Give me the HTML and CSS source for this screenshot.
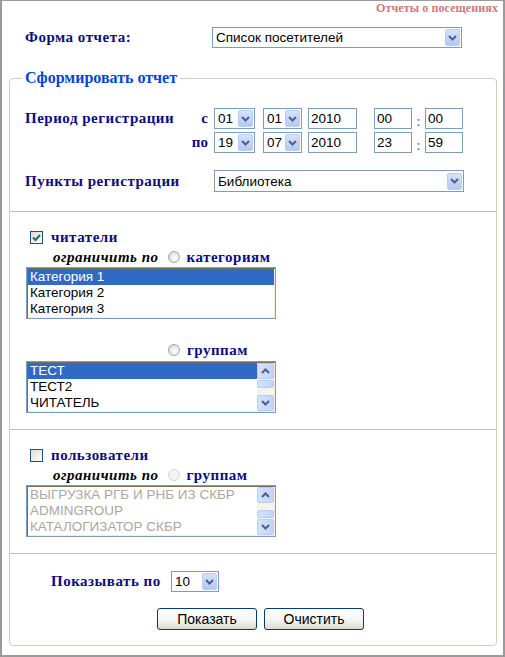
FILE: index.html
```html
<!DOCTYPE html>
<html lang="ru">
<head>
<meta charset="utf-8">
<title>Отчеты о посещениях</title>
<link rel="stylesheet" href="styles.css">
</head>
<body>
<div class="page">
  <div class="title">Отчеты о посещениях</div>

  <div class="form-row">
    <span class="lbl">Форма отчета:</span>
    <div class="sel w-form"><span class="v">Список посетителей</span><span class="b"><svg width="9" height="6" viewBox="0 0 9 6"><path d="M1 1 L4.5 4.5 L8 1" fill="none" stroke="#4d6185" stroke-width="2"/></svg></span></div>
  </div>

  <fieldset class="fs">
    <legend>Сформировать отчет</legend>

    <div class="period">
      <span class="lbl period-lbl">Период регистрации</span>
      <div class="period-rows">
        <div class="prow">
          <span class="sub">с</span>
          <div class="sel w-day"><span class="v">01</span><span class="b"><svg width="9" height="6" viewBox="0 0 9 6"><path d="M1 1 L4.5 4.5 L8 1" fill="none" stroke="#4d6185" stroke-width="2"/></svg></span></div>
          <div class="sel w-mon"><span class="v">01</span><span class="b"><svg width="9" height="6" viewBox="0 0 9 6"><path d="M1 1 L4.5 4.5 L8 1" fill="none" stroke="#4d6185" stroke-width="2"/></svg></span></div>
          <div class="inp w-year">2010</div>
          <div class="inp w-time">00</div>
          <span class="colon">:</span>
          <div class="inp w-time">00</div>
        </div>
        <div class="prow">
          <span class="sub">по</span>
          <div class="sel w-day"><span class="v">19</span><span class="b"><svg width="9" height="6" viewBox="0 0 9 6"><path d="M1 1 L4.5 4.5 L8 1" fill="none" stroke="#4d6185" stroke-width="2"/></svg></span></div>
          <div class="sel w-mon"><span class="v">07</span><span class="b"><svg width="9" height="6" viewBox="0 0 9 6"><path d="M1 1 L4.5 4.5 L8 1" fill="none" stroke="#4d6185" stroke-width="2"/></svg></span></div>
          <div class="inp w-year">2010</div>
          <div class="inp w-time">23</div>
          <span class="colon">:</span>
          <div class="inp w-time">59</div>
        </div>
      </div>
    </div>

    <div class="points">
      <span class="lbl points-lbl">Пункты регистрации</span>
      <div class="sel w-points"><span class="v">Библиотека</span><span class="b"><svg width="9" height="6" viewBox="0 0 9 6"><path d="M1 1 L4.5 4.5 L8 1" fill="none" stroke="#4d6185" stroke-width="2"/></svg></span></div>
    </div>

    <div class="sep sep-1"></div>

    <div class="block">
      <div class="chk-row">
        <span class="cb"><svg width="9" height="8" viewBox="0 0 9 8"><path d="M1 3.5 L3.5 6 L8 1" fill="none" stroke="#21715a" stroke-width="2"/></svg></span>
        <span class="lbl">читатели</span>
      </div>
      <div class="limit-row">
        <span class="limit">ограничить по</span>
        <span class="rb"></span>
        <span class="lbl">категориям</span>
      </div>
      <div class="lst">
        <div class="items">
          <div class="it sel-it">Категория 1</div>
          <div class="it">Категория 2</div>
          <div class="it">Категория 3</div>
        </div>
      </div>
      <div class="group-row">
        <span class="rb"></span>
        <span class="lbl">группам</span>
      </div>
      <div class="lst lst-3">
        <div class="items">
          <div class="it sel-it">ТЕСТ</div>
          <div class="it">ТЕСТ2</div>
          <div class="it">ЧИТАТЕЛЬ</div>
        </div>
        <div class="sb">
          <span class="sbb"><svg width="9" height="6" viewBox="0 0 9 6"><path d="M1 5 L4.5 1.5 L8 5" fill="none" stroke="#4d6185" stroke-width="2"/></svg></span>
          <span class="thumb"></span>
          <span class="sbb sbb-down"><svg width="9" height="6" viewBox="0 0 9 6"><path d="M1 1 L4.5 4.5 L8 1" fill="none" stroke="#4d6185" stroke-width="2"/></svg></span>
        </div>
      </div>
    </div>

    <div class="sep sep-2"></div>

    <div class="block">
      <div class="chk-row">
        <span class="cb"></span>
        <span class="lbl">пользователи</span>
      </div>
      <div class="limit-row">
        <span class="limit">ограничить по</span>
        <span class="rb rb-dis"></span>
        <span class="lbl">группам</span>
      </div>
      <div class="lst lst-dis">
        <div class="items">
          <div class="it">ВЫГРУЗКА РГБ И РНБ ИЗ СКБР</div>
          <div class="it">ADMINGROUP</div>
          <div class="it">КАТАЛОГИЗАТОР СКБР</div>
        </div>
        <div class="sb">
          <span class="sbb"><svg width="9" height="6" viewBox="0 0 9 6"><path d="M1 5 L4.5 1.5 L8 5" fill="none" stroke="#4d6185" stroke-width="2"/></svg></span>
          <span class="thumb thumb-low"></span>
          <span class="sbb"><svg width="9" height="6" viewBox="0 0 9 6"><path d="M1 1 L4.5 4.5 L8 1" fill="none" stroke="#4d6185" stroke-width="2"/></svg></span>
        </div>
      </div>
    </div>

    <div class="sep sep-3"></div>

    <div class="show-row">
      <span class="lbl">Показывать по</span>
      <div class="sel w-show"><span class="v">10</span><span class="b"><svg width="9" height="6" viewBox="0 0 9 6"><path d="M1 1 L4.5 4.5 L8 1" fill="none" stroke="#4d6185" stroke-width="2"/></svg></span></div>
    </div>

    <div class="btn-row">
      <button class="btn" type="button">Показать</button>
      <button class="btn" type="button">Очистить</button>
    </div>
  </fieldset>
</div>
</body>
</html>
```

FILE: styles.css
```css
html, body { margin: 0; padding: 0; background: #fff; }
body { font-family: "Liberation Serif", "Times New Roman", serif; }

.page {
  width: 505px;
  height: 657px;
  box-sizing: border-box;
  border: 2px solid #9a9a9a;
  border-top-width: 1px;
  padding: 0;
}

.title {
  text-align: right;
  color: #d07878;
  font-weight: bold;
  font-size: 12px;
  letter-spacing: 0.1px;
  line-height: 12px;
  padding: 1px 5px 0 0;
  height: 13px;
}

.lbl {
  color: #0c0c80;
  font-weight: bold;
  font-size: 15px;
  letter-spacing: 0.5px;
  white-space: nowrap;
}

.form-row {
  display: flex;
  align-items: center;
  margin-top: 12px;
  padding-left: 23px;
  height: 21px;
}
.form-row .lbl { width: 187px; }

/* select look */
.sel {
  display: flex;
  align-items: center;
  height: 21px;
  box-sizing: border-box;
  border: 1px solid #7f9db9;
  background: #fff;
  font-family: "Liberation Sans", Arial, sans-serif;
  font-size: 13.5px;
  color: #000;
}
.sel .v { flex: 1; padding-left: 3px; white-space: nowrap; }
.sel .b {
  width: 15px;
  height: 17px;
  margin-right: 1px;
  border: 1px solid #b8cdf9;
  border-radius: 2px;
  box-sizing: border-box;
  background: linear-gradient(#d6e2fe, #b4c8f6);
  display: flex;
  align-items: center;
  justify-content: center;
}
.w-form { width: 250px; }
.w-day { width: 41px; }
.w-mon { width: 39px; margin-left: 8px; }
.w-points { width: 250px; height: 22px; }
.w-show { width: 48px; }

.inp {
  height: 21px;
  box-sizing: border-box;
  border: 1px solid #7f9db9;
  font-family: "Liberation Sans", Arial, sans-serif;
  font-size: 13.5px;
  line-height: 19px;
  padding-left: 2px;
}
.w-year { width: 49px; margin-left: 6px; }
.w-time { width: 38px; }
.w-year + .w-time { margin-left: 17px; }
.colon {
  width: 13px;
  text-align: center;
  color: #6d87a8;
  font-family: "Liberation Sans", Arial, sans-serif;
  font-size: 13px;
  font-weight: bold;
  padding-top: 6px;
}

/* fieldset */
.fs {
  margin: 21px 6px 0 7px;
  padding: 0 0 0 15px;
  border: 1px solid #d0d0bf;
  border-radius: 4px;
  height: 577px;
  box-sizing: border-box;
  min-width: 0;
}
.fs legend {
  color: #0046d5;
  font-weight: bold;
  font-size: 16px;
  padding: 0 3px;
  margin-left: -3px;
  line-height: 18px;
}

.period {
  display: flex;
  margin-top: 21px;
}
.period-lbl { width: 160px; padding-top: 2px; }
.period-rows { display: flex; flex-direction: column; gap: 3px; }
.prow { display: flex; align-items: stretch; }
.sub {
  width: 23px;
  text-align: right;
  color: #0c0c80;
  font-weight: bold;
  font-size: 15px;
  margin-right: 6px;
  padding-top: 2px;
}

.points {
  display: flex;
  align-items: center;
  margin-top: 17px;
}
.points-lbl { width: 189px; }

.sep {
  border-top: 1px solid #c0c0c0;
  margin: 19px 0 0 -15px;
}
.sep-1 { margin-top: 19px; }
.sep-2 { margin-top: 16px; }
.sep-3 { margin-top: 16px; }

.block { padding-left: 1px; }
.chk-row {
  display: flex;
  align-items: center;
  margin-top: 19px;
  height: 13px;
  padding-left: 4px;
}
.cb {
  width: 13px;
  height: 13px;
  box-sizing: border-box;
  border: 1px solid #1c5180;
  background: linear-gradient(135deg, #dcdcd7, #fff);
  display: inline-flex;
  align-items: center;
  justify-content: center;
  margin-right: 8px;
}
.limit-row {
  display: flex;
  align-items: center;
  height: 16px;
  margin-top: 5px;
  padding-left: 27px;
}
.limit {
  font-style: italic;
  font-weight: bold;
  font-size: 15px;
  letter-spacing: 0.5px;
  color: #000;
  margin-right: 9px;
  white-space: nowrap;
}
.rb {
  width: 12px;
  height: 12px;
  border-radius: 50%;
  box-sizing: border-box;
  border: 1px solid #a0a8b8;
  background: radial-gradient(circle at 60% 60%, #fff 0, #e4e4e4 60%, #c8c8c8 100%);
  margin-right: 7px;
  flex: none;
}
.rb-dis { border-color: #d6d6d0; background: #f4f4f0; }

.lst {
  display: flex;
  width: 250px;
  height: 52px;
  box-sizing: border-box;
  border: 1px solid #7f9db9;
  margin-top: 2px;
  box-shadow: inset 1px 1px 0 #716f64, inset -1px -1px 0 #f1efe2;
  padding: 1px;
  font-family: "Liberation Sans", Arial, sans-serif;
  font-size: 13.5px;
}
.lst-3 { margin-top: 3px; }
.items { flex: 1; overflow: hidden; }
.it { height: 16px; line-height: 16px; padding-left: 2px; white-space: nowrap; }
.sel-it { background: #316ac5; color: #fff; }
.lst-dis .it { color: #aca899; }

.group-row {
  display: flex;
  align-items: center;
  height: 16px;
  margin-top: 23px;
  padding-left: 142px;
}

.sb {
  width: 17px;
  display: flex;
  flex-direction: column;
  background: #f4f3ee;
}
.sbb {
  height: 16px;
  box-sizing: border-box;
  border: 1px solid #b8cdf9;
  border-radius: 2px;
  background: linear-gradient(90deg, #d6e2fe, #c2d3fb);
  display: flex;
  align-items: center;
  justify-content: center;
  flex: none;
}
.sbb-down { margin-top: auto; }
.thumb {
  height: 8px;
  margin-top: 1px;
  box-sizing: border-box;
  border: 1px solid #b8cdf9;
  border-radius: 2px;
  background: linear-gradient(90deg, #d6e2fe, #c2d3fb);
  flex: none;
}
.thumb-low { margin-top: auto; margin-bottom: 1px; }

.show-row {
  display: flex;
  align-items: center;
  margin-top: 17px;
  padding-left: 26px;
}
.show-row .lbl { width: 120px; }

.btn-row {
  display: flex;
  gap: 7px;
  margin-top: 16px;
  padding-left: 132px;
}
.btn {
  width: 100px;
  height: 22px;
  box-sizing: border-box;
  border: 1px solid #003c74;
  border-radius: 3px;
  background: linear-gradient(#ffffff, #f3f3ef 60%, #dcdad0);
  font-family: "Liberation Sans", Arial, sans-serif;
  font-size: 14px;
  color: #000;
  padding: 0;
}
```
